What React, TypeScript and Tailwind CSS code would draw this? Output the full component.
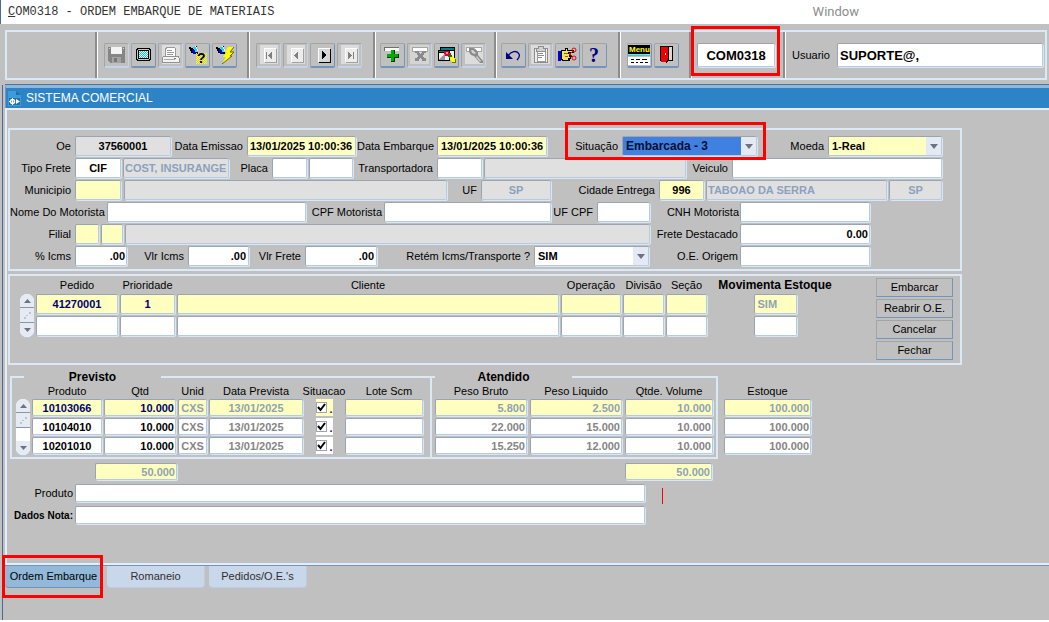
import type { ReactNode } from 'react';
import { twMerge } from 'tailwind-merge';

const FIELD = 'block min-w-0 rounded-[2px] border border-t-[#9aa5b1] border-l-[#9aa5b1] border-r-[#b5cae3] border-b-[#b5cae3] px-[3px] text-[11px] font-bold outline-none shadow-[1px_1px_0_#dbe6f3]';

const TONES = {
  white: 'bg-white text-black',
  yellow: 'bg-[#ffffc0] text-black',
  gray: 'bg-[#e0e0e0] text-black',
  muted: 'bg-[#e0e0e0] text-[#8ba1bd]',
  current: 'bg-[#ffffc0] text-[#000070]',
  currentMuted: 'bg-[#ffffc0] text-[#8fa3b0]',
  rowMuted: 'bg-white text-[#858585]',
};

type Tone = keyof typeof TONES;

interface FieldProps {
  id?: string;
  name?: string;
  value?: string;
  tone?: Tone;
  className?: string;
}

function Field({ id, name, value = '', tone = 'white', className }: FieldProps) {
  return <input id={id} aria-label={name} type="text" defaultValue={value} className={twMerge(FIELD, TONES[tone], className)} />;
}

function Label({ htmlFor, className, children }: { htmlFor: string; className?: string; children: ReactNode }) {
  return <label htmlFor={htmlFor} className={twMerge('shrink-0 pr-1 text-right text-[11px] whitespace-nowrap', className)}>{children}</label>;
}

function Dropdown({ id, value, tone, className }: { id: string; value: string; tone: string; className?: string }) {
  return (
    <div className={twMerge('relative h-5 min-w-0 rounded-[2px] border border-t-[#9aa5b1] border-l-[#9aa5b1] border-r-[#b5cae3] border-b-[#b5cae3] bg-white shadow-[1px_1px_0_#dbe6f3]', className)}>
      <select id={id} className={twMerge('block h-full w-full appearance-none pl-[3px] font-bold outline-none', tone)}>
        <option>{value}</option>
      </select>
      <span className="pointer-events-none absolute inset-y-0 right-0 flex w-[15px] items-center justify-center bg-[#e4e9f3]">
        <svg width="8" height="5" viewBox="0 0 8 5"><path d="M0 0h8L4 5z" fill="#6c7284" /></svg>
      </span>
    </div>
  );
}

function Highlight({ className }: { className: string }) {
  return <span className={twMerge('pointer-events-none absolute z-10 border-[3px] border-[#ff0000]', className)} />;
}

function Separator() {
  return <span className="w-[3px] shrink-0 self-stretch border-r border-l-2 border-r-white border-l-[#8c8c8c]" />;
}

function ToolButton({ title, disabled, children }: { title: string; disabled?: boolean; children: ReactNode }) {
  return (
    <button
      type="button"
      title={title}
      disabled={disabled}
      className={twMerge(
        'flex h-[25px] w-[25px] shrink-0 items-center justify-center rounded-[2px] border border-b-2 border-t-[#a4a4a4] border-l-[#a4a4a4]',
        disabled ? 'border-r-[#c3d3e8] border-b-[#c3d3e8]' : 'border-r-[#7495bb] border-b-[#7495bb]',
      )}
    >
      <svg width="21" height="21" viewBox="0 0 21 21" shapeRendering="crispEdges" className="overflow-visible">{children}</svg>
    </button>
  );
}

/* Toolbar drawings, all on a 21x21 grid */

const SaveIcon = () => (
  <>
    <path d="M2 3h17v16H4l-2-2z" fill="#858585" />
    <path d="M5 3h11v7H5z" fill="#f4f4f4" />
    <path d="M3 4h1v1H3zM17 4h1v1h-1z" fill="#d8d8d8" />
    <path d="M6 13h9v6H6z" fill="#a3a3a3" />
    <path d="M8 14h3v4H8z" fill="#777" />
  </>
);

const ScreenIcon = () => (
  <>
    <defs>
      <pattern id="dots" width="2" height="2" patternUnits="userSpaceOnUse">
        <path d="M0 0h2v2H0z" fill="#fff" />
        <path d="M0 0h1v1H0zM1 1h1v1H1z" fill="#00d8d8" />
      </pattern>
    </defs>
    <path d="M4 4h13v1h1v11h-1v1H4v-1H3V5h1z" fill="#000" />
    <path d="M5 5h11v1h1v9h-1v1H5v-1H4V6h1z" fill="#c8c8c8" />
    <path d="M5 6h11v9H5z" fill="#000" />
    <path d="M6 7h9v7H6z" fill="url(#dots)" />
  </>
);

const PrintIcon = () => (
  <>
    <path d="M2 1h18v19H2z" fill="#dedede" />
    <path d="M6 3h8l1 1v8H5V4h1z" fill="#fff" stroke="#999" />
    <path d="M7 6h5v1H7zM7 8h7v1H7zM7 10h6v1H7z" fill="#999" />
    <path d="M4 12h14l1 2v4H2v-4z" fill="#f3f3f3" stroke="#929292" />
    <path d="M4 15h11v1H4z" fill="#aaa" />
    <path d="M14 14h2v1h-2z" fill="#777" />
  </>
);

const Torch = () => (
  <>
    <path d="M2 3h2v1h2v1h2v2h1v2H8v1H6V9H4V7H3V5H2z" fill="#000" />
    <path d="M5 5h3v2h1v3H6V8H5z" fill="#0000c8" />
    <path d="M6 3h3v1h1v3H9v1H8V6H7V4H6z" fill="#00e0e8" />
    <path d="M8 2h1v1h1v2h1v2h-1V5H9V3H8z" fill="#fff" />
    <path d="M9 8h2v2H9zM9 2h1v1H9z" fill="#000" />
  </>
);

const QueryIcon = () => (
  <>
    <defs>
      <pattern id="sparks" width="2" height="2" patternUnits="userSpaceOnUse">
        <path d="M0 0h1v1H0zM1 1h1v1H1z" fill="#ffff00" />
      </pattern>
    </defs>
    <Torch />
    <path d="M9 9h11v11H9z" fill="url(#sparks)" />
    <text x="10" y="19" fontSize="14" fontWeight="900" fontFamily="Liberation Sans, sans-serif">?</text>
  </>
);

const ExecuteIcon = () => (
  <>
    <Torch />
    <path d="M14 3h6l-4 5h4l-4 4h2L8 20l4-7H9l4-5h-2z" fill="#ffff00" shapeRendering="auto" />
    <path d="M20 3l-4 5h4l-4 4h2L8 20" fill="none" stroke="#6e6800" shapeRendering="auto" />
  </>
);

function PageIcon({ d, disabled }: { d: string; disabled?: boolean }) {
  return (
    <>
      {disabled && <path d="M2 1h18v19H2z" fill="#dcdcdc" />}
      <path d="M7 5h12v14H7z" fill={disabled ? '#a0a0a0' : '#000'} />
      <path d="M6 4h12v14H6z" fill="#fff" />
      <path d="M7 5h11v13H7z" fill={disabled ? '#ececec' : '#d6d6d6'} />
      <path d={d} fill={disabled ? '#808080' : '#000'} />
    </>
  );
}

const InsertIcon = () => (
  <>
    <path d="M2 3h15v4H2z" fill="#fff" />
    <path d="M2 3h15v1H2zM2 3h1v4H2z" fill="#707070" />
    <path d="M9 6h4v4h4v4h-4v4H9v-4H5v-4h4z" fill="#003c00" />
    <path d="M9 6h3v4h4v3h-4v4H9v-4H5v-3h4z" fill="#00a808" />
  </>
);

const DeleteIcon = () => (
  <>
    <path d="M1 1h19v19H1z" fill="#d4d4d4" />
    <path d="M3 3h15v4H3z" fill="#fff" stroke="#a5a5a5" />
    <path d="M6 7h4v2h1v1h1V9h1V7h4v2h-2v2h-1v2h1v1h2v3h-4v-2h-1v-1h-1v1h-1v2H6v-3h2v-1h1v-2H8V9H6z" fill="#8a8a8a" />
  </>
);

const ClearIcon = () => (
  <>
    <path d="M4 3h15v12H4z" fill="#000" />
    <path d="M5 4h13v2H5z" fill="#008080" />
    <path d="M5 7h13v7H5z" fill="#f2f2f2" />
    <path d="M2 6h12v11H2z" fill="#000" />
    <path d="M3 7h10v1H3z" fill="#008080" />
    <path d="M3 9h10v7H3z" fill="#eee" />
    <path d="M3 16l6-7v7z" fill="#999" />
    <path d="M8 7h5v2h2v4h-3v-1H9v-2H8z" fill="#e00030" />
    <path d="M10 8h2v2h-2z" fill="#ff80c0" />
    <path d="M12 12l2-2 3 3-2 3z" fill="#008000" />
    <path d="M14 13l3-1 3 4v3h-3l-3-4z" fill="#ffff00" />
    <path d="M19 15h1v4h-4v-1h3z" fill="#777000" />
  </>
);

const LockIcon = () => (
  <>
    <path d="M2 1h18v19H2z" fill="#dcdcdc" />
    <path d="M3 3h15v4H3z" fill="#fff" stroke="#a5a5a5" />
    <path d="M6 4h5l4 4-3 4-5-3z" fill="#b4b4b4" />
    <path d="M6 4h4l1 1 2 1 2 2v3l5 6v2h-3l-6-7-3-1-2-3z" fill="#8a8a8a" shapeRendering="auto" />
    <path d="M8 6h2l3 3-1 1-3-1zM14 12l4 5-1 1-4-5z" fill="#d2d2d2" shapeRendering="auto" />
  </>
);

const UndoIcon = () => (
  <g fill="none" stroke="#000080" shapeRendering="auto">
    <path d="M5 12c3-5 9-6 11-2 1 2 0 4-2 6" strokeWidth="1.3" />
    <path d="M3 8v7h7z" fill="#000080" stroke="none" />
  </g>
);

const ClipboardIcon = () => (
  <>
    <path d="M1 1h19v19H1z" fill="#dcdcdc" />
    <path d="M4 4h13v14H4z" fill="#eee" stroke="#8e8e8e" />
    <path d="M7 7h8v10H7z" fill="#fff" stroke="#9a9a9a" />
    <path d="M8 2h5v2h2v3H6V4h2z" fill="#d0d0d0" stroke="#8e8e8e" />
    <path d="M8 9h5v1H8zM8 11h6v1H8zM8 13h4v1H8z" fill="#8e8e8e" />
  </>
);

const HandIcon = () => (
  <>
    <path d="M1 7h3v10H1z" fill="#0000d8" />
    <path d="M4 6h4V4h3v2h6v3h-3v2h1v2h-1v2h-1v2H6l-2-1z" fill="#000" />
    <path d="M5 7h4V5h1v2h6v1h-5v2h3v1h-2v2h1v1h-2v2H6l-1-1z" fill="#f0e060" />
    <path d="M7 9h4v1H7zM8 12h3v1H8z" fill="#807000" />
    <g fill="none" stroke="#f00000" shapeRendering="auto">
      <circle cx="17" cy="6" r="2" />
      <circle cx="17" cy="14" r="2" />
      <path d="M12 11l4-4M12 9l4 4" />
    </g>
  </>
);

const HelpIcon = () => (
  <text x="5" y="18" fontSize="20" fontWeight="bold" fill="#000080" fontFamily="Liberation Serif, serif">?</text>
);

const MenuIcon = () => (
  <>
    <path d="M-1 1h22v9H-1z" fill="#000" />
    <text x="0" y="8" fontSize="8" fontWeight="bold" fill="#ffff00" fontFamily="Liberation Sans, sans-serif">Menu</text>
    <path d="M-1 11h22v1H-1z" fill="#00e0e0" />
    <path d="M-1 13h22v8H-1z" fill="#fff" />
    <path d="M2 15h3v1H2zM7 15h4v1H7zM13 15h5v1h-5zM2 18h3v1H2zM7 18h2v1H7zM11 18h3v1h-3zM16 18h3v1h-3z" fill="#000" />
  </>
);

const ExitIcon = () => (
  <>
    <path d="M4 2h13v15H4z" fill="#000" />
    <path d="M12 3h4v13h-4z" fill="#d8d8d8" />
    <path d="M5 3h7v12l-2 3H5z" fill="#f00000" />
    <path d="M12 3h1v13l-3 3v-2l2-2z" fill="#000" />
    <path d="M9 9h1v2H9z" fill="#ffff00" />
  </>
);

function Toolbar() {
  return (
    <div className="mt-[6px] mr-[2px] ml-[5px] flex h-[50px] border-2 border-[#dbe8f6] [&>div]:flex [&>div]:items-center [&>div]:gap-[2px]">
      <div className="w-[88px] shrink-0" />
      <Separator />
      <div className="w-[149px] shrink-0 pl-[6px]">
        <ToolButton title="Salvar" disabled><SaveIcon /></ToolButton>
        <ToolButton title="Tela"><ScreenIcon /></ToolButton>
        <ToolButton title="Imprimir" disabled><PrintIcon /></ToolButton>
        <ToolButton title="Consultar"><QueryIcon /></ToolButton>
        <ToolButton title="Executar consulta"><ExecuteIcon /></ToolButton>
      </div>
      <Separator />
      <div className="w-[123px] shrink-0 pl-[6px]">
        <ToolButton title="Primeiro" disabled><PageIcon disabled d="M8 8h1v7H8zM10 11h1v-1h1V9h1V8h1v7h-1v-1h-1v-1h-1v-1h-1z" /></ToolButton>
        <ToolButton title="Anterior" disabled><PageIcon disabled d="M9 11h1v-1h1V9h1V8h1v7h-1v-1h-1v-1h-1v-1H9z" /></ToolButton>
        <ToolButton title="Próximo"><PageIcon d="M10 7h1v1h1v1h1v1h1v2h-1v1h-1v1h-1v1h-1z" /></ToolButton>
        <ToolButton title="Último" disabled><PageIcon disabled d="M9 8h1v1h1v1h1v1h1v1h-1v1h-1v1h-1v1H9zM14 8h1v7h-1z" /></ToolButton>
      </div>
      <Separator />
      <div className="w-[118px] shrink-0 pl-1">
        <ToolButton title="Inserir"><InsertIcon /></ToolButton>
        <ToolButton title="Excluir" disabled><DeleteIcon /></ToolButton>
        <ToolButton title="Limpar"><ClearIcon /></ToolButton>
        <ToolButton title="Bloquear" disabled><LockIcon /></ToolButton>
      </div>
      <Separator />
      <div className="w-[121px] shrink-0 pl-1">
        <ToolButton title="Desfazer"><UndoIcon /></ToolButton>
        <ToolButton title="Colar" disabled><ClipboardIcon /></ToolButton>
        <ToolButton title="Recortar"><HandIcon /></ToolButton>
        <ToolButton title="Ajuda"><HelpIcon /></ToolButton>
      </div>
      <Separator />
      <div className="w-[68px] shrink-0 pl-[6px]">
        <ToolButton title="Menu"><MenuIcon /></ToolButton>
        <ToolButton title="Sair"><ExitIcon /></ToolButton>
      </div>
      <Separator />
      <div className="relative w-[91px] shrink-0 pl-[5px]">
        <input aria-label="Programa" type="text" defaultValue="COM0318" className={twMerge(FIELD, 'h-6 w-[78px] bg-white px-0 text-center text-[13px]')} />
        <Highlight className="-top-[6px] -left-px h-[50px] w-[89px]" />
      </div>
      <Separator />
      <div className="min-w-0 flex-1 pr-[2px] pl-[6px]">
        <label htmlFor="usuario" className="w-[43px] shrink-0 text-[11px]">Usuario</label>
        <input id="usuario" type="text" defaultValue="SUPORTE@," className={twMerge(FIELD, 'h-6 flex-1 bg-white px-[2px] text-[13px]')} />
      </div>
    </div>
  );
}

function HeaderForm() {
  return (
    <section className="flex flex-col gap-[2px] border-2 border-[#dbe8f6] pt-[6px] pr-[18px] pb-[3px] [&>div]:flex [&>div]:items-center">
      <div>
        <Label htmlFor="oe" className="w-[65px]">Oe</Label>
        <Field id="oe" value="37560001" tone="gray" className="h-5 w-24 text-center" />
        <Label htmlFor="emissao" className="w-[76px]">Data Emissao</Label>
        <Field id="emissao" value="13/01/2025 10:00:36" tone="yellow" className="h-5 w-[109px] px-[2px]" />
        <Label htmlFor="embarque" className="w-[81px] pr-[3px]">Data Embarque</Label>
        <Field id="embarque" value="13/01/2025 10:00:36" tone="yellow" className="h-5 w-[110px]" />
        <div className="relative flex w-[210px] shrink-0 items-center">
          <Label htmlFor="situacao" className="w-[75px]">Situação</Label>
          <Dropdown id="situacao" value="Embarcada - 3" tone="bg-[#3f80e0] text-[12px] text-[#0a0f30]" className="flex-1" />
          <Highlight className="-top-[14px] -right-[9px] -bottom-[4px] left-[18px]" />
        </div>
        <Label htmlFor="moeda" className="w-[71px]">Moeda</Label>
        <Dropdown id="moeda" value="1-Real" tone="bg-[#ffffc0] text-[11px] text-black" className="flex-1" />
      </div>
      <div>
        <Label htmlFor="tipoFrete" className="w-[65px]">Tipo Frete</Label>
        <Field id="tipoFrete" value="CIF" className="h-5 w-[46px] text-center" />
        <Field name="Descrição do frete" value="COST, INSURANGE" tone="muted" className="ml-[2px] h-5 w-[106px] px-px" />
        <Label htmlFor="placa" className="w-[43px]">Placa</Label>
        <Field id="placa" className="h-5 w-[35px]" />
        <Field name="Placa número" className="ml-[2px] h-5 w-11" />
        <Label htmlFor="transportadora" className="w-[84px]">Transportadora</Label>
        <Field id="transportadora" className="h-5 w-[45px]" />
        <Field name="Nome da transportadora" tone="gray" className="ml-[2px] h-5 w-[202px]" />
        <Label htmlFor="veiculo" className="w-[46px]">Veiculo</Label>
        <Field id="veiculo" className="h-5 flex-1" />
      </div>
      <div>
        <Label htmlFor="municipio" className="w-[65px]">Municipio</Label>
        <Field id="municipio" tone="yellow" className="h-5 w-[46px]" />
        <Field name="Nome do município" tone="gray" className="ml-[3px] h-5 w-[323px]" />
        <Label htmlFor="uf" className="w-[34px]">UF</Label>
        <Field id="uf" value="SP" tone="muted" className="h-5 w-[70px] text-center" />
        <Label htmlFor="cidade" className="w-[108px]">Cidade Entrega</Label>
        <Field id="cidade" value="996" tone="yellow" className="h-5 w-[45px] text-center" />
        <Field name="Nome da cidade" value="TABOAO DA SERRA" tone="muted" className="ml-[2px] h-5 flex-1 px-px" />
        <Field name="UF entrega" value="SP" tone="muted" className="ml-[2px] h-5 w-[53px] text-center" />
      </div>
      <div>
        <Label htmlFor="motorista" className="w-[97px]">Nome Do Motorista</Label>
        <Field id="motorista" className="h-5 w-[199px]" />
        <Label htmlFor="cpf" className="w-[78px] pr-[2px]">CPF Motorista</Label>
        <Field id="cpf" className="h-5 w-[167px]" />
        <Label htmlFor="ufCpf" className="w-[46px]">UF CPF</Label>
        <Field id="ufCpf" className="h-5 w-[53px]" />
        <Label htmlFor="cnh" className="w-[90px] pr-px">CNH Motorista</Label>
        <Field id="cnh" className="h-5 w-[130px]" />
      </div>
      <div>
        <Label htmlFor="filial" className="w-[65px]">Filial</Label>
        <Field id="filial" tone="yellow" className="h-5 w-6" />
        <Field name="Filial complemento" tone="yellow" className="ml-[2px] h-5 w-[22px]" />
        <Field name="Nome da filial" tone="gray" className="ml-[2px] h-5 w-[525px]" />
        <Label htmlFor="destacado" className="w-[90px] pr-[2px]">Frete Destacado</Label>
        <Field id="destacado" value="0.00" className="h-5 w-[130px] px-px text-right" />
      </div>
      <div>
        <Label htmlFor="icms" className="w-[65px]">% Icms</Label>
        <Field id="icms" value=".00" className="h-5 w-[52px] px-px text-right" />
        <Label htmlFor="vlrIcms" className="w-[61px]">Vlr Icms</Label>
        <Field id="vlrIcms" value=".00" className="h-5 w-[61px] px-[2px] text-right" />
        <Label htmlFor="vlrFrete" className="w-14">Vlr Frete</Label>
        <Field id="vlrFrete" value=".00" className="h-5 w-[72px] px-[2px] text-right" />
        <Label htmlFor="retem" className="w-[157px]">Retém Icms/Transporte ?</Label>
        <Dropdown id="retem" value="SIM" tone="bg-white text-[11px] text-black" className="w-[115px]" />
        <Label htmlFor="origem" className="w-[91px] pr-[2px]">O.E. Origem</Label>
        <Field id="origem" className="h-5 w-[130px]" />
      </div>
    </section>
  );
}

function Scroller({ className }: { className: string }) {
  return (
    <div className={twMerge('flex shrink-0 flex-col overflow-hidden rounded-full bg-white shadow-[0_1px_0_#b5cae3]', className)}>
      <button type="button" aria-label="Subir" className="flex h-[14px] items-center justify-center border-b border-[#8796ab] bg-[#e6ebf3]">
        <svg width="7" height="4" viewBox="0 0 7 4"><path d="M0 4h7L3.500 0z" fill="#6c7284" /></svg>
      </button>
      <span className="flex h-[15px] items-center justify-center border-b border-[#8796ab] bg-[#e6ebf3]">
        <svg width="7" height="7" viewBox="0 0 7 7"><path d="M0 5h2v2H0zM2 3h2v1H2zM5 0h2v2H5z" fill="#b5c4d8" /></svg>
      </span>
      <button type="button" aria-label="Descer" className="mt-auto flex h-[14px] items-center justify-center bg-[#e6ebf3]">
        <svg width="7" height="4" viewBox="0 0 7 4"><path d="M0 0h7L3.500 4z" fill="#6c7284" /></svg>
      </button>
    </div>
  );
}

const ORDER_COLUMNS = ['Pedido', 'Prioridade', 'Cliente', 'Operação', 'Divisão', 'Seção'];
const ORDERS = [
  ['41270001', '1', '', '', '', ''],
  ['', '', '', '', '', ''],
];

function Orders() {
  return (
    <section className="mt-[3px] flex border-2 border-[#dbe8f6] pb-[3px]">
      <Scroller className="mt-[18px] ml-[10px] h-[43px] w-[14px]" />
      <table className="min-w-0 flex-1 table-fixed border-separate border-spacing-[2px] self-start text-[11px] leading-[14px]">
        <colgroup>
          <col className="w-[82px]" />
          <col className="w-[55px]" />
          <col />
          <col className="w-[60px]" />
          <col className="w-[41px]" />
          <col className="w-[41px]" />
          <col className="w-[132px]" />
        </colgroup>
        <thead>
          <tr>
            {ORDER_COLUMNS.map(c => <th key={c} className="p-0 font-normal">{c}</th>)}
            <th className="p-0 text-[12px] font-bold">Movimenta Estoque</th>
          </tr>
        </thead>
        <tbody>
          {ORDERS.map((row, r) => (
            <tr key={r}>
              {row.map((value, c) => (
                <td key={c} className="p-0">
                  <Field name={ORDER_COLUMNS[c]} value={value} tone={r === 0 ? 'current' : 'white'} className="h-5 w-full text-center" />
                </td>
              ))}
              <td className="p-0">
                <Field name="Movimenta Estoque" value={r === 0 ? 'SIM' : ''} tone={r === 0 ? 'currentMuted' : 'white'} className="mx-auto h-5 w-[43px]" />
              </td>
            </tr>
          ))}
        </tbody>
      </table>
      <div className="mt-[2px] mr-[7px] ml-[33px] flex w-[77px] shrink-0 flex-col gap-[2px]">
        {['Embarcar', 'Reabrir O.E.', 'Cancelar', 'Fechar'].map(action => (
          <button key={action} type="button" className="h-[19px] border border-t-[#a4a4a4] border-r-[#7495bb] border-b-[#7495bb] border-l-[#a4a4a4] text-[11px] leading-[17px]">
            {action}
          </button>
        ))}
      </div>
    </section>
  );
}

const ITEMS = [
  { produto: '10103066', bruto: '5.800', liquido: '2.500' },
  { produto: '10104010', bruto: '22.000', liquido: '15.000' },
  { produto: '10201010', bruto: '15.250', liquido: '12.000' },
];

const GRID = 'table-fixed border-separate text-[11px] leading-[11px]';

function Legend({ className, children }: { className: string; children: ReactNode }) {
  return (
    <legend className={className}>
      <span className="block w-[137px] text-center text-[12px] leading-[14px] font-bold">{children}</span>
    </legend>
  );
}

function Items() {
  return (
    <div className="mt-[5px] ml-[2px] flex items-start">
      <fieldset className="w-[420px] shrink-0 border-2 border-r-0 border-[#dbe8f6] pb-px">
        <Legend className="ml-3">Previsto</Legend>
        <div className="flex">
          <Scroller className="mt-[15px] ml-1 h-[56px] w-[14px]" />
          <table className={twMerge(GRID, 'w-[395px] border-spacing-[2px]')}>
            <thead>
              <tr>
                <th className="w-[70px] p-0 font-normal">Produto</th>
                <th className="w-[72px] p-0 font-normal">Qtd</th>
                <th className="w-[29px] p-0 font-normal">Unid</th>
                <th className="w-[94px] p-0 font-normal">Data Prevista</th>
                <th className="w-[38px] p-0 font-normal"><div className="-mx-1">Situacao</div></th>
                <th className="w-[78px] p-0 pl-[10px] font-normal">Lote Scm</th>
              </tr>
            </thead>
            <tbody>
              {ITEMS.map((item, i) => {
                const main: Tone = i === 0 ? 'current' : 'white';
                const muted: Tone = i === 0 ? 'currentMuted' : 'rowMuted';
                return (
                  <tr key={item.produto}>
                    <td className="p-0"><Field name="Produto" value={item.produto} tone={main} className="h-[17px] w-full text-center" /></td>
                    <td className="p-0"><Field name="Qtd" value="10.000" tone={main} className="h-[17px] w-full px-px text-right" /></td>
                    <td className="p-0"><Field name="Unid" value="CXS" tone={muted} className="h-[17px] w-full px-px text-center" /></td>
                    <td className="p-0"><Field name="Data Prevista" value="13/01/2025" tone={muted} className="h-[17px] w-full text-center" /></td>
                    <td className="p-0">
                      <label className={twMerge('mx-auto flex h-[17px] w-[17px] items-center gap-1 font-bold text-[#400060]', i === 0 ? 'bg-[#ffffc0]' : 'bg-white')}>
                        <span className="relative block h-[11px] w-[11px] shrink-0">
                          <input type="checkbox" defaultChecked aria-label="Situacao" className="peer block h-[11px] w-[11px] appearance-none border border-[#9aa5b1] bg-white" />
                          <svg className="pointer-events-none absolute inset-0 hidden peer-checked:block" width="11" height="11" viewBox="0 0 11 11">
                            <path d="M2 5l2.500 3L9 2" fill="none" stroke="#000" strokeWidth="2" />
                          </svg>
                        </span>
                        <span className="mt-1 -ml-px">.</span>
                      </label>
                    </td>
                    <td className="p-0"><Field name="Lote Scm" tone={main} className="h-[17px] w-full" /></td>
                  </tr>
                );
              })}
            </tbody>
          </table>
        </div>
      </fieldset>
      <fieldset className="w-[288px] shrink-0 border-2 border-[#dbe8f6] pb-px">
        <Legend className="ml-[3px]">Atendido</Legend>
        <table className={twMerge(GRID, 'w-full border-spacing-x-[3px] border-spacing-y-[2px]')}>
          <thead>
            <tr>
              <th className="w-[92px] p-0 font-normal">Peso Bruto</th>
              <th className="w-[92px] p-0 font-normal">Peso Liquido</th>
              <th className="p-0 font-normal">Qtde. Volume</th>
            </tr>
          </thead>
          <tbody>
            {ITEMS.map((item, i) => {
              const tone: Tone = i === 0 ? 'currentMuted' : 'rowMuted';
              return (
                <tr key={item.produto}>
                  <td className="p-0"><Field name="Peso Bruto" value={item.bruto} tone={tone} className="h-[17px] w-full px-px text-right" /></td>
                  <td className="p-0"><Field name="Peso Liquido" value={item.liquido} tone={tone} className="h-[17px] w-full px-px text-right" /></td>
                  <td className="p-0"><Field name="Qtde. Volume" value="10.000" tone={tone} className="h-[17px] w-full px-px text-right" /></td>
                </tr>
              );
            })}
          </tbody>
        </table>
      </fieldset>
      <table className={twMerge(GRID, 'mt-[14px] ml-1 w-[91px] border-spacing-[2px]')}>
        <thead>
          <tr><th className="p-0 font-normal">Estoque</th></tr>
        </thead>
        <tbody>
          {ITEMS.map((item, i) => (
            <tr key={item.produto}>
              <td className="p-0"><Field name="Estoque" value="100.000" tone={i === 0 ? 'currentMuted' : 'rowMuted'} className="h-[17px] w-full px-px text-right" /></td>
            </tr>
          ))}
        </tbody>
      </table>
    </div>
  );
}

function Footer() {
  return (
    <>
      <div className="mt-1 flex pl-[87px]">
        <Field name="Total Qtd" value="50.000" tone="currentMuted" className="h-[17px] w-[82px] px-px text-right" />
        <Field name="Total Volume" value="50.000" tone="currentMuted" className="ml-[448px] h-[17px] w-[87px] px-px text-right" />
      </div>
      <div className="mt-1 flex items-start">
        <div className="flex flex-col gap-1">
          <div className="flex items-center">
            <Label htmlFor="produto" className="w-[67px] pr-[2px]">Produto</Label>
            <Field id="produto" className="h-[18px] w-[570px]" />
          </div>
          <div className="flex items-center">
            <Label htmlFor="nota" className="w-[67px] pr-[2px] text-[10px] font-bold">Dados Nota:</Label>
            <Field id="nota" className="h-[18px] w-[570px]" />
          </div>
        </div>
        <span className="mt-1 ml-[17px] h-4 border-l border-[#ff0000]" />
      </div>
    </>
  );
}

function Tabs() {
  const tab = 'block h-[22px] w-[98px] rounded-b-[4px] border-r border-b text-[11px]';
  return (
    <nav role="tablist" className="flex items-start gap-1 border-t border-[#7495bb] pb-8">
      <div className="relative">
        <button type="button" role="tab" aria-selected="true" className={twMerge(tab, 'border-[#6d93b8] bg-[#92b8da] text-black')}>Ordem Embarque</button>
        <Highlight className="-top-[11px] right-0 -left-[3px] h-[43px]" />
      </div>
      <button type="button" role="tab" aria-selected="false" className={twMerge(tab, 'border-[#bccde2] bg-[#c9d7ea] text-[#303030]')}>Romaneio</button>
      <button type="button" role="tab" aria-selected="false" className={twMerge(tab, 'border-[#bccde2] bg-[#c9d7ea] text-[#303030]')}>Pedidos/O.E.'s</button>
    </nav>
  );
}

export default function App() {
  return (
    <div className="flex min-h-screen flex-col overflow-hidden border-b-2 border-white bg-[#c0c0c0] font-['Liberation_Sans',Arial,sans-serif] text-black">
      <header className="flex h-6 items-center border-l border-[#4a6a95] bg-white pl-[7px]">
        <h1 className="font-['Liberation_Mono',monospace] text-[12px] text-[#333]"><span className="underline">C</span>OM0318 - ORDEM EMBARQUE DE MATERIAIS</h1>
        <button type="button" className="mr-[190px] ml-auto font-[Roboto,sans-serif] text-[13px] text-[#8c8c8c]">Window</button>
      </header>
      <Toolbar />
      <main className="mt-[5px] ml-[2px] flex flex-1 flex-col border-l border-[#4a6a95] pl-[2px]">
        <div className="flex h-[23px] items-center gap-[5px] border-t-[3px] border-l border-t-[#8fb8dd] border-l-[#7495bb] bg-[#2c84c6] pl-[2px] shadow-[0_-1px_0_#4f7398]">
          <svg width="13" height="15" viewBox="0 0 13 15">
            <path d="M0 0h8l5 4v11H0z" fill="#3e9bd8" />
            <path d="M8 0v4h5z" fill="#1f6fae" />
            <path d="M1 7h11v7H1z" fill="#1f6fae" />
            <circle cx="4.500" cy="10.500" r="2" fill="none" stroke="#fff" strokeWidth="1.500" />
            <path d="M4 7h1v7H4zM1 10h2v1H1zM8 8l4 2.500L8 13z" fill="#fff" />
          </svg>
          <h2 className="text-[12px] text-white">SISTEMA COMERCIAL</h2>
        </div>
        <div className="flex-1 border-y-2 border-l-2 border-[#e4edf8] pt-[18px] pb-4 pl-px">
          <div className="max-w-[954px]">
            <HeaderForm />
            <Orders />
            <Items />
            <Footer />
          </div>
        </div>
        <Tabs />
      </main>
    </div>
  );
}
